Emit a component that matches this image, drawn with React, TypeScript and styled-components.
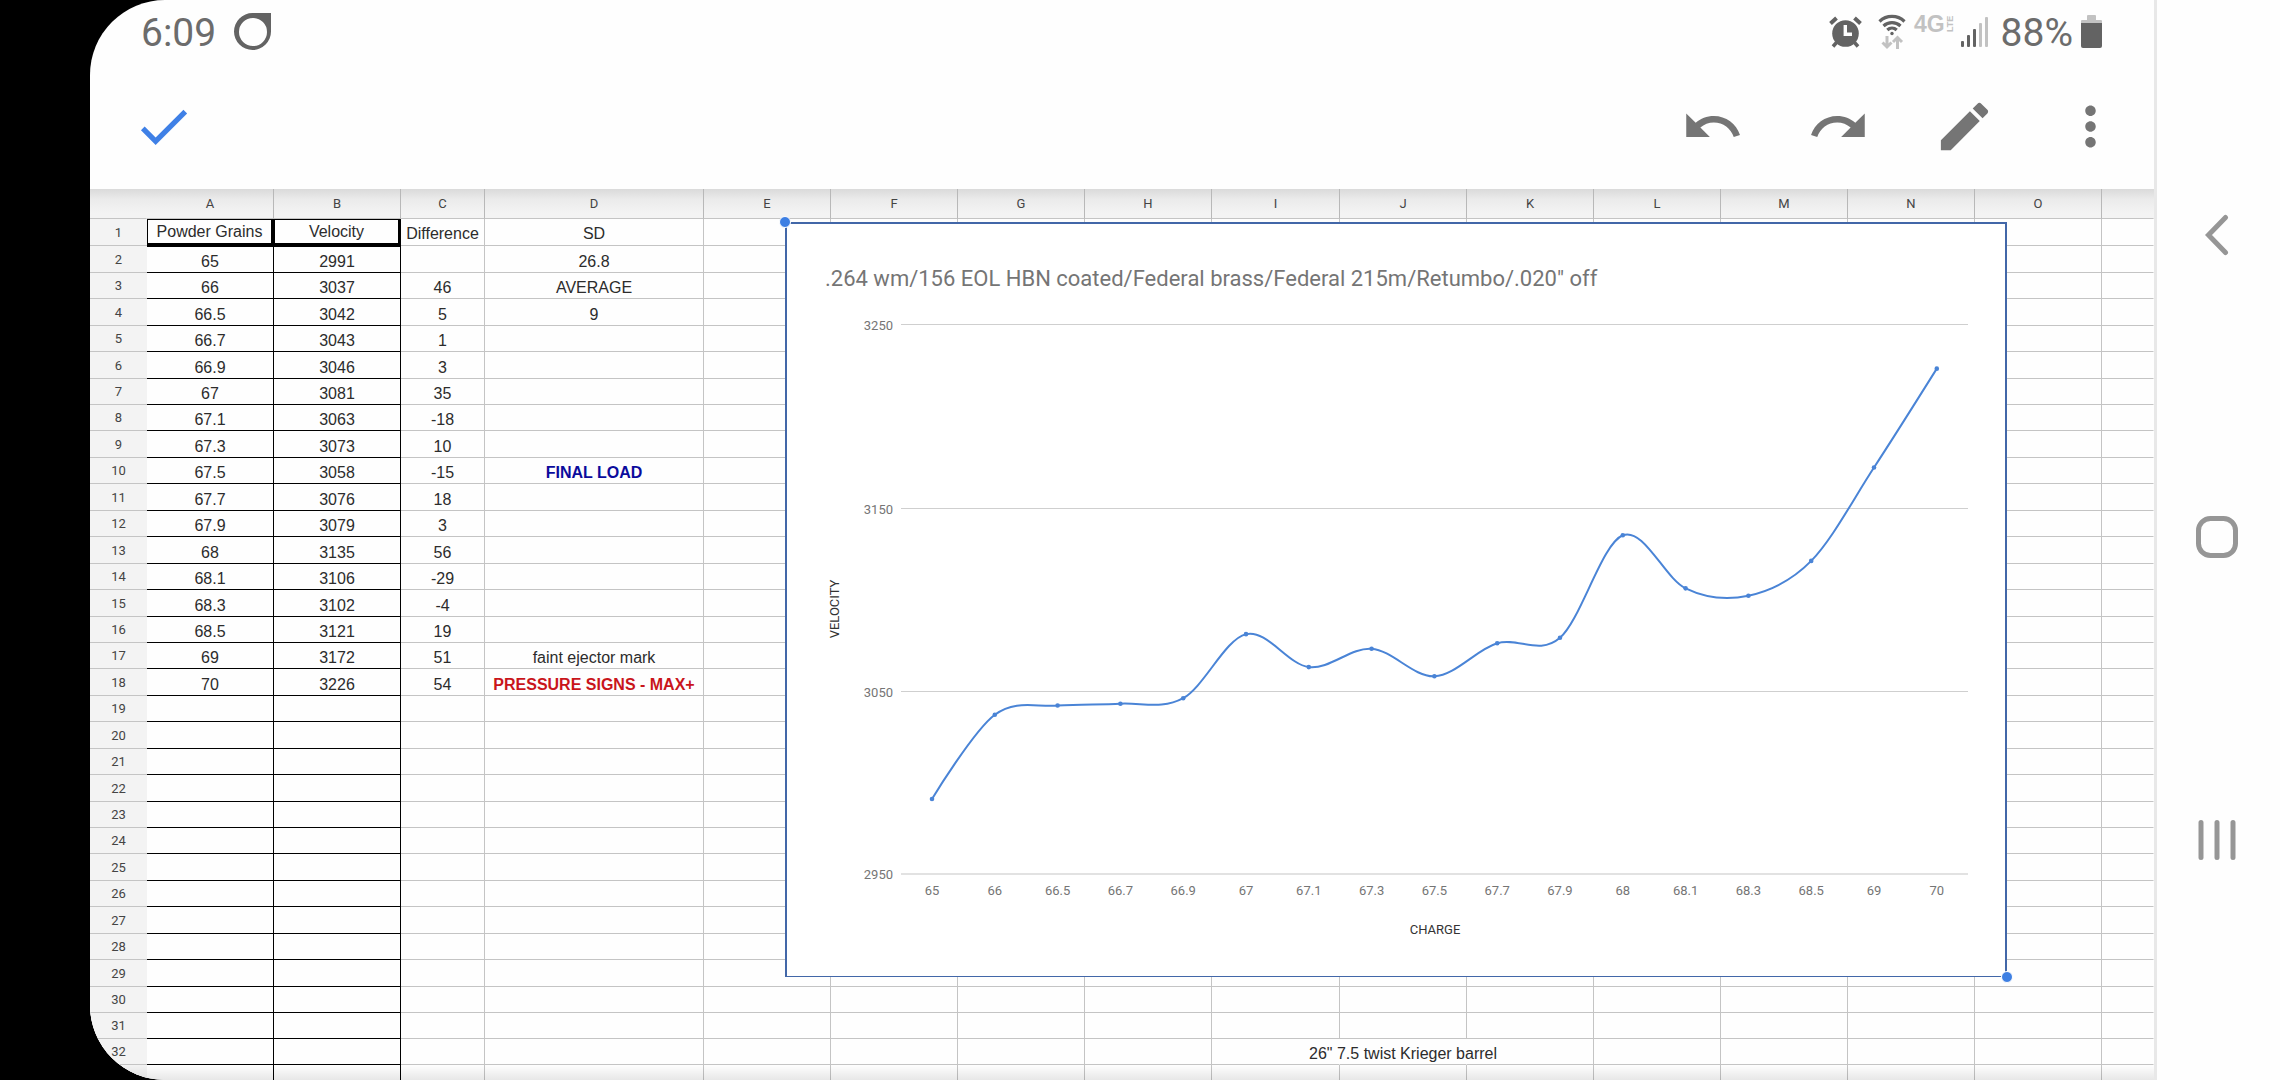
import React from 'react';
import styled, { createGlobalStyle } from 'styled-components';

const Global = createGlobalStyle`
  *, *::before, *::after { box-sizing: border-box; }
  body { margin: 0; background: #000; }
`;

const UI_FONT = "Roboto, 'Noto Sans', sans-serif";
const CELL_FONT = "'Liberation Sans', Arial, sans-serif";
const GRID = '#c4c4c4';
const CHART_BLUE = '#4a84d6';

/* ---------- device shell ---------- */

const Device = styled.div`
  display: flex;
  height: 100vh;
  padding-left: 90px;
  background: #000;
  font-family: ${UI_FONT};
  overflow: hidden;
`;

const Screen = styled.div`
  flex: 1;
  display: flex;
  min-width: 0;
  background: #fefefe;
  border-radius: 75px 0 0 75px;
  overflow: hidden;
`;

const AppArea = styled.main`
  flex: 1;
  min-width: 0;
  display: flex;
  flex-direction: column;
`;

const StatusBar = styled.header`
  display: flex;
  align-items: center;
  justify-content: space-between;
  height: 63px;
  padding: 0 52px 0 51px;
  color: #636363;
  font-size: 39px;
  line-height: 46px;
`;

const StatusGroup = styled.div<{ $gap: number }>`
  display: flex;
  align-items: center;
  gap: ${(p) => p.$gap}px;
`;

const StatusText = styled.span`
  padding-top: 2px;
  color: #6c6c6c;
`;

const Network = styled.span`
  display: flex;
  gap: 1px;
  height: 36px;
  color: #c2c2c2;
  font-family: ${CELL_FONT};
  font-weight: 700;
  font-size: 23px;
  line-height: 20px;
`;

const Lte = styled.small`
  height: 18px;
  font-size: 9px;
  line-height: 9px;
  writing-mode: vertical-rl;
  transform: rotate(180deg);
`;

const Toolbar = styled.nav`
  display: flex;
  align-items: center;
  justify-content: space-between;
  height: 126px;
  padding: 0 32px 0 42px;
`;

const Actions = styled.div`
  display: flex;
  gap: 63px;
`;

const IconButton = styled.button<{ $color: string }>`
  display: flex;
  align-items: center;
  justify-content: center;
  width: 63px;
  height: 63px;
  padding: 0;
  border: 0;
  background: none;
  color: ${(p) => p.$color};
`;

const SystemNav = styled.nav`
  display: flex;
  flex-direction: column;
  align-items: center;
  justify-content: space-between;
  width: 126px;
  padding: 203px 3px 209px 0;
  border-left: 3px solid #e8e8e8;
  background: #fefefe;
`;

/* ---------- sheet ---------- */

const Sheet = styled.section`
  position: relative;
  flex: 1;
  min-height: 0;
  overflow: hidden;
  background: #fefefe;

  &::after {
    content: '';
    position: absolute;
    inset: auto 0 0 0;
    height: 15px;
    background: linear-gradient(to bottom, rgba(0, 0, 0, 0), rgba(0, 0, 0, 0.09));
  }
`;

const Grid = styled.table`
  width: 100%;
  table-layout: fixed;
  border-collapse: separate;
  border-spacing: 0;
`;

const Col = styled.col<{ $w?: number }>`
  width: ${(p) => (p.$w ? `${p.$w}px` : 'auto')};
`;

const HeadRow = styled.tr`
  height: 30px;
  background: linear-gradient(to bottom, #dadada, #ebebeb 35%, #f3f3f3 80%);
`;

const ColHead = styled.th<{ $corner?: boolean }>`
  padding: 0;
  border-right: 1px solid ${(p) => (p.$corner ? 'transparent' : '#b8b8b8')};
  border-bottom: 1px solid ${GRID};
  color: #444;
  font-size: 13px;
  line-height: 15px;
  font-weight: 400;
`;

const Row = styled.tr<{ $h: number }>`
  height: ${(p) => p.$h}px;
`;

const RowHead = styled.th`
  padding: 0;
  border-bottom: 1px solid ${GRID};
  background: #f3f3f3;
  color: #444;
  font-size: 13px;
  line-height: 15px;
  font-weight: 400;
`;

type CellKind = 'plain' | 'ruled' | 'boxed';

const Cell = styled.td<{ $kind: CellKind; $open?: boolean; $tone?: string; $first?: boolean }>`
  padding: 0 0 ${(p) => (p.$first ? 2 : 1)}px;
  vertical-align: bottom;
  text-align: center;
  white-space: nowrap;
  font-family: ${CELL_FONT};
  font-size: 16px;
  line-height: 18px;
  font-weight: ${(p) => (p.$tone ? 700 : 400)};
  color: ${(p) => p.$tone ?? '#2c2c2c'};
  border-right: 1px solid ${(p) => (p.$open ? 'transparent' : p.$kind === 'plain' ? GRID : '#000')};
  border-bottom: 1px solid ${(p) => (p.$kind === 'plain' ? GRID : '#000')};
  ${(p) =>
    p.$kind === 'boxed' &&
    `
    position: relative;
    border: solid #000;
    border-width: 1px 3px 3px 1px;
    box-shadow: 0 1px 0 #000;
  `}
`;

const Overflowing = styled.span`
  display: flex;
  justify-content: center;
`;

/* ---------- chart ---------- */

const ChartFrame = styled.figure`
  position: absolute;
  top: 33px;
  left: 695px;
  width: 1222px;
  margin: 0;
  padding-top: 38px;
  border: 2px solid #4267a8;
  border-bottom-width: 1px;
  background: #fff;
`;

const ChartTitle = styled.figcaption`
  padding: 2px 0 0 38px;
  color: #757575;
  font-size: 22px;
  line-height: 30px;
`;

const Plot = styled.svg`
  display: block;
  width: 100%;
  height: auto;
  font-family: ${UI_FONT};
  font-size: 13px;
`;

const Handle = styled.i<{ $end?: boolean }>`
  position: absolute;
  ${(p) => (p.$end ? 'right: -8px; bottom: -7px;' : 'left: -8px; top: -8px;')}
  width: 12px;
  height: 12px;
  border: 1px solid #fff;
  border-radius: 50%;
  background: #3d7fe3;
`;

const charges = ['65', '66', '66.5', '66.7', '66.9', '67', '67.1', '67.3', '67.5', '67.7', '67.9', '68', '68.1', '68.3', '68.5', '69', '70'];
const velocities = [2991, 3037, 3042, 3043, 3046, 3081, 3063, 3073, 3058, 3076, 3079, 3135, 3106, 3102, 3121, 3172, 3226];

const notes: Record<number, { text: string; tone?: string }> = {
  1: { text: 'SD' },
  2: { text: '26.8' },
  3: { text: 'AVERAGE' },
  4: { text: '9' },
  10: { text: 'FINAL LOAD', tone: '#0b0b9c' },
  17: { text: 'faint ejector mark' },
  18: { text: 'PRESSURE SIGNS - MAX+', tone: '#c9151b' },
};

const columns = 'ABCDEFGHIJKLMNO'.split('');
const columnWidths = [127, 127, 84, 219, 127, 127, 127, 127, 128, 127, 127, 127, 127, 127, 127];
const rowHeights = [
  27, 27, 26, 27, 26, 27, 26, 26, 27, 26, 27, 26, 27, 26, 27, 26, 26,
  27, 26, 27, 26, 27, 26, 26, 27, 26, 27, 26, 27, 26, 26, 26, 27,
];

function cellText(row: number, col: string): string {
  const i = row - 2;
  if (col === 'A') return row === 1 ? 'Powder Grains' : charges[i] ?? '';
  if (col === 'B') return row === 1 ? 'Velocity' : velocities[i] ? String(velocities[i]) : '';
  if (col === 'C') {
    if (row === 1) return 'Difference';
    return i > 0 && velocities[i] ? String(velocities[i] - velocities[i - 1]) : '';
  }
  if (col === 'D') return notes[row]?.text ?? '';
  if (col === 'J' && row === 32) return '26" 7.5 twist Krieger barrel';
  return '';
}

function SheetRow({ row, height }: { row: number; height: number }) {
  return (
    <Row $h={height}>
      <RowHead scope="row">{row <= 32 ? row : ''}</RowHead>
      {columns.map((col) => {
        const inBlock = col === 'A' || col === 'B';
        const kind: CellKind = inBlock ? (row === 1 ? 'boxed' : 'ruled') : 'plain';
        const text = cellText(row, col);
        return (
          <Cell
            key={col}
            $kind={kind}
            $first={row === 1}
            $open={row === 32 && (col === 'I' || col === 'J')}
            $tone={col === 'D' ? notes[row]?.tone : undefined}
          >
            {col === 'J' ? <Overflowing>{text}</Overflowing> : text}
          </Cell>
        );
      })}
      <Cell $kind="plain" $open />
    </Row>
  );
}

const points = velocities.map((v, i) => ({ x: 145 + i * 62.8, y: 580 - (v - 2950) * 1.831 }));

function smoothPath(): string {
  let d = `M${points[0].x} ${points[0].y}`;
  for (let i = 0; i < points.length - 1; i++) {
    const a = points[i];
    const b = points[i + 1];
    const before = points[i - 1];
    const after = points[i + 2];
    const c1 = before ? { x: a.x + (b.x - before.x) / 6, y: a.y + (b.y - before.y) / 6 } : a;
    const c2 = after ? { x: b.x - (after.x - a.x) / 6, y: b.y - (after.y - a.y) / 6 } : b;
    d += `C${c1.x} ${c1.y} ${c2.x} ${c2.y} ${b.x} ${b.y}`;
  }
  return d;
}

const ticks = [
  { label: '3250', y: 30 },
  { label: '3150', y: 214 },
  { label: '3050', y: 397 },
  { label: '2950', y: 579 },
];

function Chart() {
  return (
    <ChartFrame>
      <ChartTitle>.264 wm/156 EOL HBN coated/Federal brass/Federal 215m/Retumbo/.020" off</ChartTitle>
      <Plot viewBox="0 0 1218 682" role="img" aria-label="Velocity by charge">
        {ticks.map((t) => (
          <g key={t.label}>
            <rect x="114" y={t.y} width="1067" height={t.label === '2950' ? 2 : 1} fill={t.label === '2950' ? '#e2e2e2' : '#cfcfcf'} />
            <text x="106" y={t.y + 6} textAnchor="end" fill="#757575">{t.label}</text>
          </g>
        ))}
        {charges.map((c, i) => (
          <text key={c} x={points[i].x} y="601" textAnchor="middle" fill="#757575">{c}</text>
        ))}
        <text x="648" y="640" textAnchor="middle" fill="#333">CHARGE</text>
        <text transform="translate(52 315) rotate(-90)" textAnchor="middle" fill="#333">VELOCITY</text>
        <path d={smoothPath()} fill="none" stroke={CHART_BLUE} strokeWidth="2" />
        {points.map((p) => (
          <circle key={p.x} cx={p.x} cy={p.y} r="2.3" fill={CHART_BLUE} />
        ))}
      </Plot>
      <Handle />
      <Handle $end />
    </ChartFrame>
  );
}

/* ---------- icons ---------- */

const Material = ({ d }: { d: string }) => (
  <svg width="63" height="63" viewBox="0 0 24 24" fill="currentColor" aria-hidden="true">
    <path d={d} />
  </svg>
);

const RingIcon = () => (
  <svg width="37" height="37" viewBox="0 0 37 37" fill="currentColor" aria-hidden="true">
    <path fillRule="evenodd" d="M18.5 0H37V18.5A18.5 18.5 0 1 1 18.5 0ZM19 5A14 14 0 1 0 19 33A14 14 0 1 0 19 5Z" />
  </svg>
);

const AlarmIcon = () => (
  <svg width="33" height="32" viewBox="0 0 33 32" aria-hidden="true">
    <circle cx="16.5" cy="17.5" r="13.3" fill="currentColor" />
    <path d="M1.5 7.5L7.5 2M31.5 7.5L25.5 2" stroke="currentColor" strokeWidth="4" />
    <path d="M7.5 26.5L4 30.5M25.5 26.5L29 30.5" stroke="currentColor" strokeWidth="3.5" />
    <path d="M16.3 9V18.3H23" fill="none" stroke="#fefefe" strokeWidth="3.4" />
  </svg>
);

const WifiIcon = () => (
  <svg width="28" height="36" viewBox="0 0 28 36" fill="none" stroke="currentColor" aria-hidden="true">
    <path d="M1.5 7.5A18 18 0 0 1 26.5 7.5M5.5 12A12.5 12.5 0 0 1 22.5 12M9.3 16A7 7 0 0 1 18.7 16" strokeWidth="3.2" />
    <circle cx="14" cy="19.5" r="1.7" fill="currentColor" stroke="none" />
    <g stroke="#c2c2c2" strokeWidth="3">
      <path d="M9 22V33M4.5 28.5L9 33L13.5 28.5" />
      <path d="M19.5 35V24M15 28L19.5 23.5L24 28" />
    </g>
  </svg>
);

const SignalIcon = () => (
  <svg width="27" height="30" viewBox="0 0 27 30" aria-hidden="true">
    {[6, 12, 18, 24, 30].map((h, i) => (
      <rect key={h} x={i * 6} y={30 - h} width="3" height={h} rx="1" fill={i < 3 ? '#636363' : '#c2c2c2'} />
    ))}
  </svg>
);

const BatteryIcon = () => (
  <svg width="21" height="33" viewBox="0 0 21 33" aria-hidden="true">
    <path d="M6 1a1 1 0 0 1 1-1h7a1 1 0 0 1 1 1v4h5a1 1 0 0 1 1 1v3H0V6a1 1 0 0 1 1-1h5Z" fill="#c2c2c2" />
    <path d="M0 8H21V31a2 2 0 0 1-2 2H2a2 2 0 0 1-2-2Z" fill="#636363" />
  </svg>
);

const NavIcon = ({ children }: { children: React.ReactNode }) => (
  <svg width="48" height="48" viewBox="0 0 48 48" fill="none" stroke="currentColor" strokeWidth="5" strokeLinecap="round" aria-hidden="true">
    {children}
  </svg>
);

export default function App() {
  return (
    <Device>
      <Global />
      <Screen>
        <AppArea>
          <StatusBar>
            <StatusGroup $gap={18}>
              <StatusText as="time">6:09</StatusText>
              <RingIcon />
            </StatusGroup>
            <StatusGroup $gap={13}>
              <StatusGroup $gap={8}>
                <StatusGroup $gap={16}>
                  <AlarmIcon />
                  <WifiIcon />
                </StatusGroup>
                <StatusGroup $gap={6}>
                  <Network>
                    4G<Lte>LTE</Lte>
                  </Network>
                  <SignalIcon />
                </StatusGroup>
              </StatusGroup>
              <StatusGroup $gap={8}>
                <StatusText>88%</StatusText>
                <BatteryIcon />
              </StatusGroup>
            </StatusGroup>
          </StatusBar>
          <Toolbar>
            <IconButton $color="#3f80e6" aria-label="Done">
              <Material d="M9 16.17L4.83 12l-1.42 1.41L9 19 21 7l-1.41-1.41z" />
            </IconButton>
            <Actions>
              <IconButton $color="#757575" aria-label="Undo">
                <Material d="M12.5 8c-2.65 0-5.05.99-6.9 2.6L2 7v9h9l-3.62-3.62c1.39-1.16 3.16-1.88 5.12-1.88 3.54 0 6.55 2.31 7.6 5.5l2.37-.78C21.08 11.03 17.15 8 12.5 8z" />
              </IconButton>
              <IconButton $color="#757575" aria-label="Redo">
                <Material d="M18.4 10.6C16.55 8.99 14.15 8 11.5 8c-4.65 0-8.58 3.03-9.96 7.22L3.9 16c1.05-3.19 4.05-5.5 7.6-5.5 1.95 0 3.73.72 5.12 1.88L13 16h9V7l-3.6 3.6z" />
              </IconButton>
              <IconButton $color="#757575" aria-label="Edit">
                <Material d="M3 17.25V21h3.75L17.81 9.94l-3.75-3.75L3 17.25zM20.71 7.04c.39-.39.39-1.02 0-1.41l-2.34-2.34c-.39-.39-1.02-.39-1.41 0l-1.83 1.83 3.75 3.75 1.83-1.83z" />
              </IconButton>
              <IconButton $color="#757575" aria-label="More options">
                <Material d="M12 8c1.1 0 2-.9 2-2s-.9-2-2-2-2 .9-2 2 .9 2 2 2zm0 2c-1.1 0-2 .9-2 2s.9 2 2 2 2-.9 2-2-.9-2-2-2zm0 6c-1.1 0-2 .9-2 2s.9 2 2 2 2-.9 2-2-.9-2-2-2z" />
              </IconButton>
            </Actions>
          </Toolbar>
          <Sheet>
            <Grid>
              <colgroup>
                <Col $w={57} />
                {columns.map((c, i) => (
                  <Col key={c} $w={columnWidths[i]} />
                ))}
                <Col />
              </colgroup>
              <thead>
                <HeadRow>
                  <ColHead $corner />
                  {columns.map((c) => (
                    <ColHead key={c} scope="col">{c}</ColHead>
                  ))}
                  <ColHead $corner />
                </HeadRow>
              </thead>
              <tbody>
                {rowHeights.map((h, i) => (
                  <SheetRow key={i} row={i + 1} height={h} />
                ))}
              </tbody>
            </Grid>
            <Chart />
          </Sheet>
        </AppArea>
        <SystemNav>
          <IconButton $color="#969696" aria-label="Back">
            <NavIcon>
              <path d="M32.5 6.5L15.5 24L32.5 41.5" />
            </NavIcon>
          </IconButton>
          <IconButton $color="#969696" aria-label="Home">
            <NavIcon>
              <rect x="5.5" y="5.5" width="37" height="37" rx="12" />
            </NavIcon>
          </IconButton>
          <IconButton $color="#969696" aria-label="Recent apps">
            <NavIcon>
              <path d="M8 6.5V41.5M24 6.5V41.5M40 6.5V41.5" />
            </NavIcon>
          </IconButton>
        </SystemNav>
      </Screen>
    </Device>
  );
}
